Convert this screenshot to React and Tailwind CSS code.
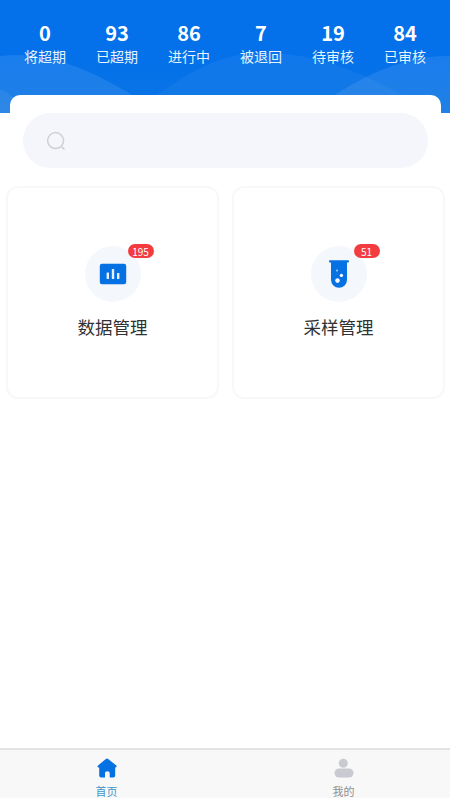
import React from "react";

const stats = [
  { label: "将超期", value: 0 },
  { label: "已超期", value: 93 },
  { label: "进行中", value: 86 },
  { label: "被退回", value: 7 },
  { label: "待审核", value: 19 },
  { label: "已审核", value: 84 },
];

function ChartIcon() {
  return (
    <svg width="28" height="22" viewBox="0 0 28 22">
      <rect x="0.8" y="0.8" width="26.4" height="20.4" rx="2.2" fill="#0571e3" />
      <g fill="#e6f1fd">
        <rect x="7.6" y="9.5" width="2.4" height="6.5" rx="0.5" />
        <rect x="12.8" y="6" width="2.4" height="10" rx="0.5" />
        <rect x="18" y="10" width="2.4" height="6" rx="0.5" />
      </g>
    </svg>
  );
}

function TubeIcon() {
  return (
    <svg width="22" height="30" viewBox="0 0 22 30">
      <path
        d="M1.8 1.2h18.4a.8.8 0 0 1 .8.8v.6a.8.8 0 0 1-.8.8H19V20.8a8 8 0 0 1-16 0V3.4H1.8a.8.8 0 0 1-.8-.8V2a.8.8 0 0 1 .8-.8z"
        fill="#0571e3"
      />
      <g fill="#f4f8fd">
        <circle cx="9" cy="11.5" r="1" opacity="0.7" />
        <circle cx="13.4" cy="16.4" r="1.7" />
        <circle cx="9.5" cy="21.6" r="2.3" />
      </g>
    </svg>
  );
}

const menus = [
  { title: "数据管理", count: 195, icon: <ChartIcon /> },
  { title: "采样管理", count: 51, icon: <TubeIcon /> },
];

export default function App() {
  return (
    <div className="w-[450px] h-[800px] flex flex-col bg-white overflow-hidden font-['Noto_Sans_CJK_SC',sans-serif]">
      {/* Header */}
      <header className="relative h-[113px] shrink-0 bg-[#0471eb] overflow-hidden">
        <svg
          className="absolute inset-0"
          width="450"
          height="113"
          viewBox="0 0 450 113"
        >
          <defs>
            <linearGradient id="shade" x1="0" y1="0" x2="0" y2="1">
              <stop offset="0.5" stopColor="#0471eb" />
              <stop offset="1" stopColor="#0a74e2" />
            </linearGradient>
            <linearGradient id="wave" x1="0" y1="0" x2="0" y2="1">
              <stop offset="0" stopColor="#fff" stopOpacity="0.05" />
              <stop offset="1" stopColor="#fff" stopOpacity="0.03" />
            </linearGradient>
          </defs>
          <rect width="450" height="113" fill="url(#shade)" />
          <path
            d="M148 101C184 77 214 53 263 53C322 53 365 75 408 98V113H148z"
            fill="url(#wave)"
          />
          <path
            d="M0 56C42 51 84 65 137 98V113H0z"
            fill="#fff"
            fillOpacity="0.09"
          />
          <path
            d="M330 98C368 73 408 55 450 56V113H330z"
            fill="#fff"
            fillOpacity="0.09"
          />
          <path d="M0 89Q7 92 14 98V113H0z" fill="#fff" fillOpacity="0.06" />
        </svg>
        <div className="relative grid grid-cols-6 px-[9px] pt-[19px] text-white text-center">
          {stats.map((s) => (
            <div key={s.label}>
              <div className="text-[20px] leading-[28px] font-bold">
                {s.value}
              </div>
              <div className="text-[14px] leading-[18px] text-[#e6f3fb]">
                {s.label}
              </div>
            </div>
          ))}
        </div>
      </header>

      {/* Search */}
      <div className="relative z-10 -mt-[18px] mx-[10px] w-[431px] shrink-0 bg-white rounded-t-[10px] pt-[18px] px-[13px]">
        <div className="h-[55px] w-[405px] rounded-full bg-[#f4f6fb] flex items-center pl-[23px]">
          <svg
            width="20"
            height="20"
            viewBox="0 0 20 20"
            fill="none"
            stroke="#cfd0d4"
            strokeWidth="1.5"
          >
            <circle cx="9.6" cy="9.6" r="8" />
            <path d="M15.5 15.5L18.5 18.5" />
          </svg>
        </div>
      </div>

      {/* Menu cards */}
      <main className="flex-1 flex items-start gap-[13px] pl-[6px] pt-[18px]">
        {menus.map((m) => (
          <div
            key={m.title}
            className="w-[213px] h-[213px] shrink-0 rounded-[12px] border-2 border-[#f8f8f8] flex flex-col items-center pt-[58px]"
          >
            <div className="relative w-[56px] h-[56px] rounded-full bg-[#f4f7fc] flex items-center justify-center">
              {m.icon}
              <span className="absolute left-[43px] -top-[2px] w-[26px] h-[14px] rounded-full bg-[#f23c3f] text-white text-[10px] leading-[15px] text-center">
                {m.count}
              </span>
            </div>
            <div className="mt-[11px] text-[17.5px] leading-[27px] text-[#303133]">
              {m.title}
            </div>
          </div>
        ))}
      </main>

      {/* Tab bar */}
      <nav className="h-[50px] mb-[2px] shrink-0 flex bg-[#f8f8f8] border-t-2 border-[#e3e3e3] text-[11px] leading-[16px] text-center overflow-hidden">
        <div className="w-[213px] flex flex-col items-center pt-[8px] text-[#3f97cb]">
          <svg className="shrink-0" width="20" height="20" viewBox="0 0 20 20" fill="#0571e3">
            <path d="M8.9.9Q10 0 11.1.9L19.3 7.5Q20.2 9.3 18.5 9.4H18.2V17.3Q18.2 19.5 16.3 19.5H12.7V15Q12.7 13.2 10.4 13.2Q8 13.2 8 15V19.5H4.2Q2.2 19.5 2.2 17.3V9.4H1.6Q-.2 9.3 1 7.5z" />
          </svg>
          <div className="mt-[5px]">首页</div>
        </div>
        <div className="w-[237px] flex flex-col items-center pl-[24px] pt-[8px] text-[#8e8e8e]">
          <svg className="shrink-0" width="20" height="20" viewBox="0 0 20 20" fill="#c9cad1">
            <circle cx="9.3" cy="5.2" r="4.5" />
            <rect x="0.5" y="10.4" width="19" height="9.1" rx="4.5" />
          </svg>
          <div className="mt-[5px]">我的</div>
        </div>
      </nav>
    </div>
  );
}
